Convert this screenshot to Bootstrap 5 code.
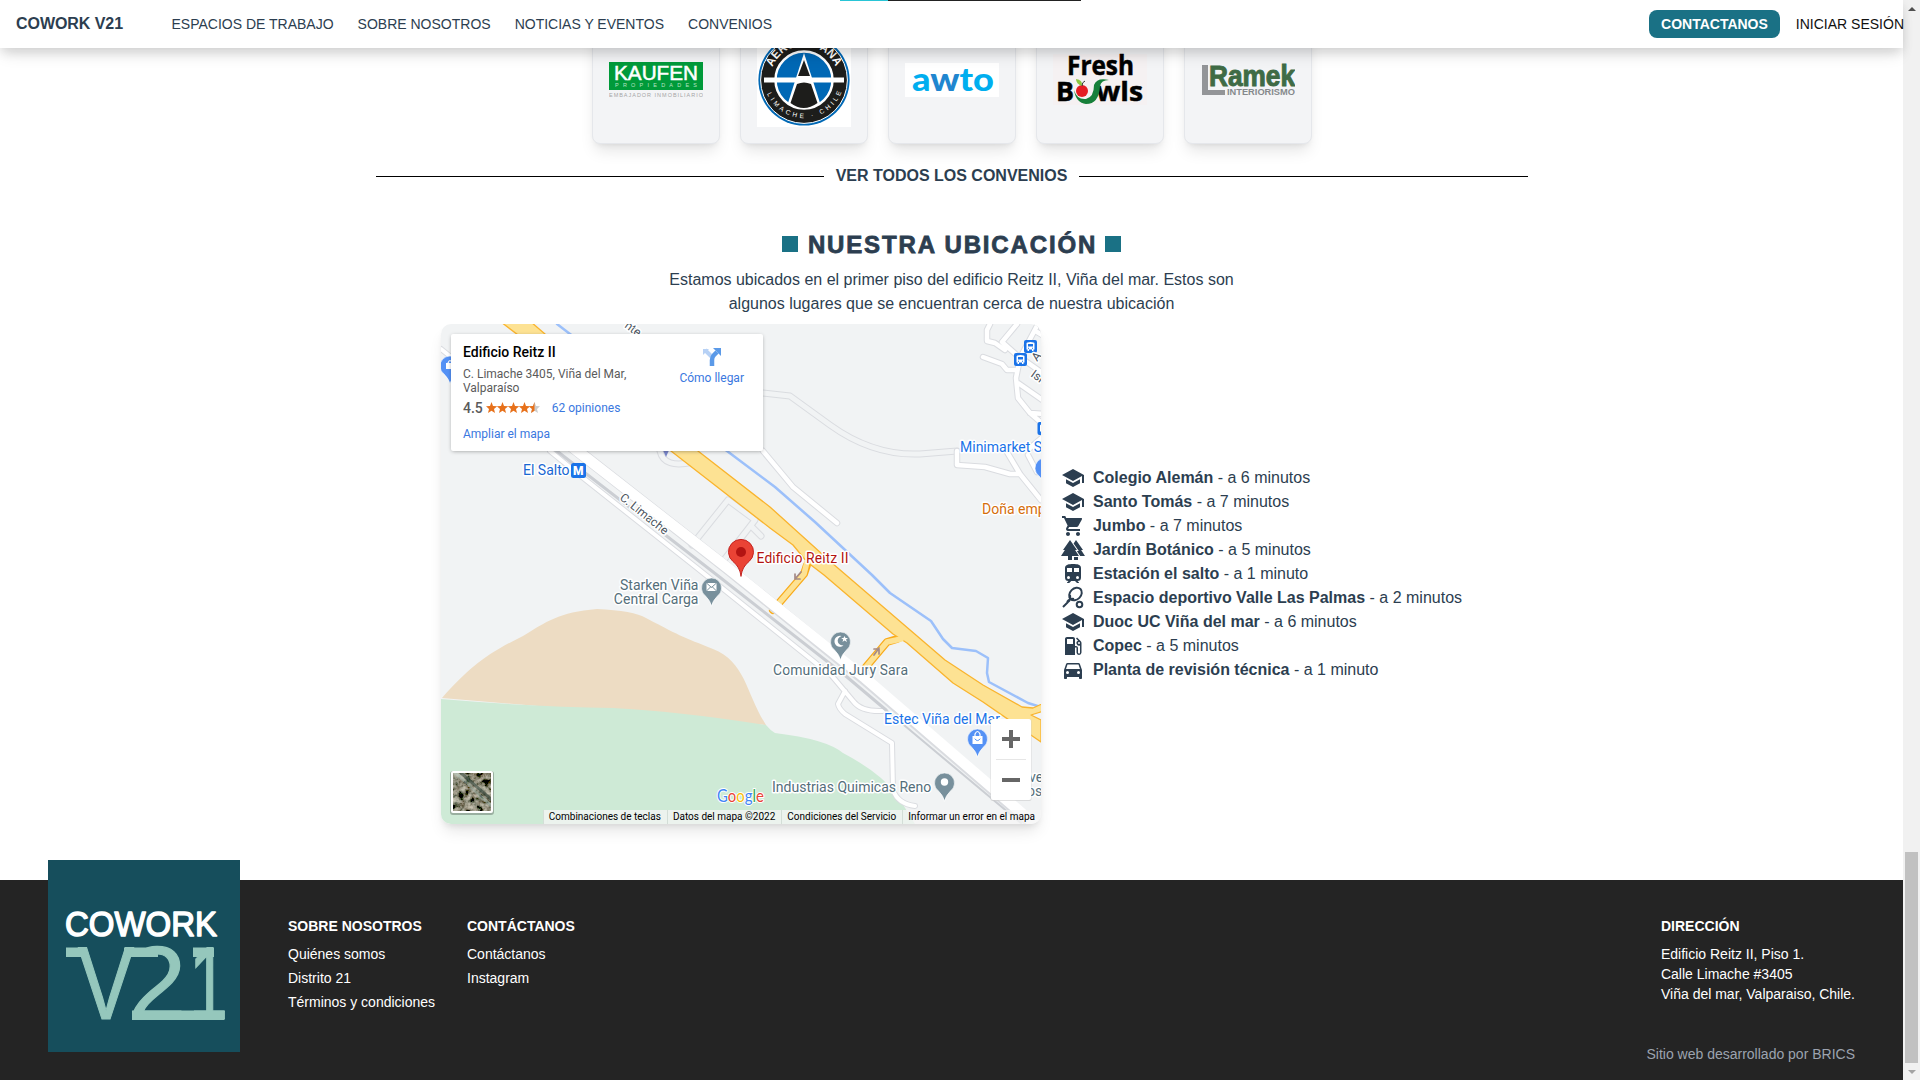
<!DOCTYPE html>
<html lang="es">
<head>
<meta charset="utf-8">
<meta name="viewport" content="width=device-width, initial-scale=1">
<title>Cowork V21</title>
<link href="https://cdn.jsdelivr.net/npm/bootstrap@5.3.0/dist/css/bootstrap.min.css" rel="stylesheet">
<style>
body{font-family:"Liberation Sans",Arial,sans-serif;font-size:16px;line-height:24px;color:#2c3e50;overflow:hidden;height:1080px}
.page-col{width:1903px;height:1080px}
.topbar{height:48px;box-shadow:0 10px 15px -3px rgba(0,0,0,.1),0 4px 10px rgba(0,0,0,.1);z-index:5}
.load-line{left:840px;top:0;width:241px;height:1px;background:linear-gradient(90deg,#29c5d6 48px,#222 48px)}
.brand-name{font-weight:700;font-size:16px;width:155.500px;letter-spacing:-.05px}
.topbar a{font-size:14px;color:#2c3e50;text-decoration:none;white-space:nowrap}
.cta{background:#1a7185;color:#fff!important;font-weight:700;border-radius:8px;height:28px;line-height:28px;padding:0 12px;margin-right:16px}
.topbar .login{color:#111;margin-right:-1px}
.partners{gap:20px;margin-top:-32px}
.partner{width:128px;height:128px;background:#f3f4f6;border:1px solid #e5e7eb;border-radius:8px;padding:16px;box-shadow:0 10px 15px -3px rgba(0,0,0,.1),0 4px 6px -4px rgba(0,0,0,.1)}
.partner svg,.places svg,.foot-logo svg{display:block}
.all-link{width:1152px;margin:20px auto 0;font-weight:700;gap:12px}
.rule{height:1px;background:#000}
.sec-title{margin-top:40px;height:32px;gap:10px;font-size:24px;font-weight:800;white-space:nowrap}
.sec-title .word{letter-spacing:1.850px;margin-right:-2px;padding-top:2px;-webkit-text-stroke:.8px #2c3e50}
.sq{width:16px;height:16px;background:#1a7185}
.intro{margin:8px auto;text-align:center}
.mapbox{width:600px;height:500px;border-radius:10px;overflow:hidden}
.mapwrap{border-radius:10px;box-shadow:0 10px 15px -3px rgba(0,0,0,.1),0 4px 6px -2px rgba(0,0,0,.08)}
.mapbox text,.mapcard,.attrib{font-family:Roboto,Arial,sans-serif}
.halo text{paint-order:stroke;stroke:#fff;stroke-width:3px;stroke-linejoin:round;font-size:14px}
.mapcard{left:10px;top:10px;width:312px;height:117px;background:#fff;border-radius:2px;box-shadow:0 1px 4px -1px rgba(0,0,0,.4);padding:9px 19px 0 12px;font-size:12px;line-height:14px;color:#5b5b5b}
.mapcard b{font-size:14px;font-weight:500;color:#000;line-height:18px;display:block;margin-bottom:6px}
.mapcard a{color:#3a78e0;text-decoration:none}
.stars{margin:6px 0 12px;height:14px}
.score{font-size:14px;font-weight:500;margin-right:3px}
.attrib{right:0;bottom:0;height:14px;font-size:10px;line-height:14px;color:#000;background:rgba(245,245,245,.75)}
.attrib span{padding:0 6px 0 5px;border-left:1px solid #d3ded7;white-space:nowrap}
.places{margin-left:20px;white-space:nowrap}
.places li{height:24px;gap:8px}
.foot{height:200px;margin-top:56px;background:#242424;color:#fff;font-size:14px;padding:0 48px}
.foot-logo{width:192px;height:192px;margin-top:-20px;background:#164e5c;flex:none}
.foot h6{font-size:14px;line-height:20px;font-weight:700;margin:36px 0 6px;white-space:nowrap}
.foot li{height:24px;white-space:nowrap}
.foot .addr li{height:20px;line-height:20px}
.foot .credit{color:#9ca3af;margin-top:40px;line-height:20px;text-align:right}
.sbar{width:17px;height:1080px;background:#f1f1f1;padding:7px 2px 6px}
.thumb{width:13px;height:211px;background:#c1c1c1;margin-top:841px}
</style>
</head>
<body>
<div class="d-flex">
<div class="page-col d-flex flex-column bg-white">
<nav class="topbar bg-white d-flex align-items-center position-relative ps-3 flex-shrink-0">
  <div class="load-line position-absolute"></div>
  <div class="brand-name">COWORK V21</div>
  <div class="d-flex gap-4"><a href="#">ESPACIOS DE TRABAJO</a><a href="#">SOBRE NOSOTROS</a><a href="#">NOTICIAS Y EVENTOS</a><a href="#">CONVENIOS</a></div>
  <a href="#" class="cta ms-auto">CONTACTANOS</a><a href="#" class="login">INICIAR SESIÓN</a>
</nav>

<div class="partners d-flex justify-content-center">
  <div class="partner"><svg width="94" height="94" font-family="Liberation Sans"><rect y="29" width="94" height="28" fill="#009a3a"/><text x="5" y="47" font-size="20" fill="#fff" stroke="#fff" stroke-width=".5" textLength="84" lengthAdjust="spacingAndGlyphs">KAUFEN</text><text x="6" y="53.500" font-size="5.500" fill="#b5e3c4" textLength="82">PROPIEDADES</text><text y="64" font-size="5.500" fill="#a5a5a5" textLength="94">EMBAJADOR INMOBILIARIO</text></svg></div>
  <div class="partner"><svg width="94" height="94" font-family="Liberation Sans"><rect width="94" height="94" fill="#fff"/><circle cx="47" cy="47" r="45.600" fill="#0068b5"/><circle cx="47" cy="47" r="43.400" fill="#1d1d1b" stroke="#fff"/><circle cx="47" cy="47" r="28.500" fill="#0068b5" stroke="#fff" stroke-width="2.500"/><path d="M47 20 31 70q16 12 32 0Z" fill="#fff"/><path d="M47 27 41 43h12zM40 51 33.500 70q13 10 27 0L54 51q-7-3-14 0Z" fill="#1d1d1b"/><path d="M7 44.500h33v5H7zM54 44.500h33v5H54zM40 44.500h14v3l-3 1.500h-8l-3-1.500z" fill="#fff"/><path id="arcT" d="M15.500 34A34 34 0 0 1 78.500 34" fill="none"/><path id="arcB" d="M8 54A40 40 0 0 0 86 54" fill="none"/><text font-size="12" font-weight="700" fill="#fff"><textPath href="#arcT" textLength="80" lengthAdjust="spacingAndGlyphs">AEROLUCANA</textPath></text><text font-size="6.500" fill="#fff"><textPath href="#arcB" startOffset="7" textLength="95">LIMACHE · CHILE</textPath></text></svg></div>
  <div class="partner"><svg width="94" height="94" font-family="Lato"><rect y="30" width="94" height="34" fill="#fff"/><text x="7" y="58" font-weight="900" font-size="32" fill="#00aeef" textLength="82" lengthAdjust="spacingAndGlyphs">a<tspan fill="#2086cf">w</tspan>to</text></svg></div>
  <div class="partner"><svg width="94" height="94" font-family="Open Sans" font-weight="700" font-size="26"><rect y="21" width="94" height="51" fill="#f5f1f2"/><text x="14" y="42" stroke="#000" stroke-width=".5" textLength="67" lengthAdjust="spacingAndGlyphs">Fresh</text><g stroke="#000" stroke-width=".5" font-size="27"><text x="3" y="68" textLength="18" lengthAdjust="spacingAndGlyphs">B</text><text x="43" y="68" textLength="47" lengthAdjust="spacingAndGlyphs">wls</text></g><path d="M21 57q3 10 12 9 8-2 8-14 3-8 15-5-8 0-9 6-1 18-14 18-10-1-12-14Z" fill="#16803a"/><circle cx="29" cy="58" r="6" fill="#e51c23"/><path d="M29 53q-6-2-6-7 7 1 6 7Z" fill="#8bc53f"/><path d="M29 53q0-4 3-5" stroke="#333" fill="none"/></svg></div>
  <div class="partner"><svg width="94" height="94" font-family="Liberation Sans"><path d="M1 32h6v25h17v5H1z" fill="#939598"/><text x="8" y="53" font-weight="700" font-size="29" fill="#3f6b45" stroke="#3f6b45" textLength="86" lengthAdjust="spacingAndGlyphs">Ramek</text><text x="26" y="62" font-size="9" font-weight="700" fill="#85898c" textLength="68" lengthAdjust="spacingAndGlyphs">INTERIORISMO</text></svg></div>
</div>

<div class="all-link d-flex align-items-center"><div class="rule flex-fill"></div><span>VER TODOS LOS CONVENIOS</span><div class="rule flex-fill"></div></div>

<div class="sec-title d-flex justify-content-center align-items-center"><span class="sq"></span><span class="word">NUESTRA UBICACIÓN</span><span class="sq"></span></div>
<p class="intro">Estamos ubicados en el primer piso del edificio Reitz II, Viña del mar. Estos son<br>algunos lugares que se encuentran cerca de nuestra ubicación</p>

<div class="d-flex justify-content-center align-items-center">
<div class="mapwrap">
<div class="mapbox position-relative">
<svg width="600" height="500" fill="none" stroke-linejoin="round" stroke-linecap="round">
<defs>
<g id="pin"><path d="M0 19Q-1 14-6 9A10 10 0 1 1 6 9Q1 14 0 19Z" stroke="#fff" stroke-width=".6"/></g>
<g id="bus" stroke="none"><rect x="-6.500" y="-6.500" width="13" height="13" rx="2" fill="#1a73e8"/><path d="M-4-3q0-1.500 4-1.500t4 1.500v6h-1v1.500H1.500V3h-3v1.500H-3V3h-1Z" fill="#fff"/><path d="M-2.500-2.500h5V0h-5zM-2.500 1.200h1v1h-1zM1.500 1.200h1v1h-1z" fill="#1a73e8"/></g>
<g id="white-roads"><path d="M549 0 546 6V17L554 19 564 26M576 0 561 18 579 34M597 0 579 34 575 54 577 74 589 89 603 101M542 33 561 40 566 46H576M577 59 603 77M589 89 603 90M583 36 603 50M596 8 603 12M516 127V141L544 143 569 150H579M566 128 579 150 600 176M587 131 596 148M322 127 352 163 396 199M603 112 589 124"/></g>
<g id="thin-roads"><path d="M109 127 136 149 256 244 391 352 412 377Q420 388 442 387M404 367 397 380Q398 385 404 390L451 419 452 466Q457 480 474 482M0 25 10 33"/></g>
<g id="outline-roads"><path d="M322 69 349 72 389 101Q432 132 479 130L516 127M219 127Q223 145 252 138M251 221 287 176 314 196 279 241M320 212 312 204"/></g>
</defs>
<rect width="600" height="500" fill="#f1f3f4"/>
<path d="M1 374C28 344 45 330 82 312 105 298 118 288 156 285 180 286 197 289 205 294 245 315 240 312 272 325 305 338 305 370 325 401Z" fill="#eddcc3"/>
<path d="M0 375Q95 383 172 384 235 387 325 401 329 406 334 409 385 415 402 429 440 449 456 471L474 500H0Z" fill="#ceead6"/>
<use href="#outline-roads" stroke="#dadce0" stroke-width="7"/><use href="#outline-roads" stroke="#f1f3f4" stroke-width="5"/>
<use href="#white-roads" stroke="#dadce0" stroke-width="6.500"/><use href="#white-roads" stroke="#fff" stroke-width="4.500"/>
<use href="#thin-roads" stroke="#dadce0" stroke-width="6"/><use href="#thin-roads" stroke="#fff" stroke-width="4"/>
<path d="M116 0 129 10 286 127 334 163 374 198 431 251 449 269 490 297 502 315 511 324 535 327 547 334 546 349 548 358 587 379 600 383" stroke="#9cc0fa" stroke-width="2.500"/>
<g stroke="#f9ab1a" stroke-width="8"><path d="M366 241 363 250 332 286M456 315 446 318 419 350"/></g>
<path d="M60-2 230 127 329 204 352 221 366 238 383 251 452 310 466 319 512 359 542 378 600 418V396L590 391 603 387V379L592 384 581 383 542 361 504 336 391 239 329 183 257 127 104 10 90-2Z" fill="#fde293" stroke="#f9b42e" stroke-width="1.300"/>
<path d="M366 238 363 250 332 286M460 315 446 318 419 350" stroke="#fde293" stroke-width="5.500"/>
<path d="M115 110 286 244 422 354 600 507" stroke="#dadce0" stroke-width="12"/>
<path d="M116 111 288 245 424 354 604 509" stroke="#fff" stroke-width="10.500"/>
<path d="M112 124 276 251 406 353 445 386" stroke="#cbced3" stroke-width="3"/><path d="M445 386 562 484 580 499" stroke="#cbced3" stroke-width="2"/>
<path d="M360 248l-6 7m0-5v5h5M433 331l5-7m-5 1h5v5" stroke="#a58a87" stroke-width="1.700"/>
<g stroke="none">
<g fill="#5491f5"><use href="#pin" x="9" y="41"/><use href="#pin" x="536.500" y="414"/><use href="#pin" x="604" y="143"/></g><path d="M221 124h8l-4 9z" fill="#7986cb"/>
<g fill="#78909c"><use href="#pin" x="270.500" y="263"/><use href="#pin" x="399.500" y="317"/><use href="#pin" x="503.500" y="458"/></g>
<path d="M5 39h8v6H5zM531.500 412h10v8h-10zM265.500 259h10v8h-10z" fill="#fff"/>
<path d="m265.500 259 5 4.500 5-4.500m-10 8 4-4m6 4-4-4" stroke="#78909c"/><path d="M534 412v-2q2.500-5 5 0v2M7 39q2-5 4 0" stroke="#fff" stroke-width="1.200" fill="none"/><path d="M534 415q2.500 3.500 5 0" stroke="#5491f5" fill="none"/>
<circle cx="503.500" cy="458" r="3.700" fill="#fff"/><path d="M402.500 321.500A5.500 5.500 0 1 1 400.500 312Q395.500 314 397 318.500 398.500 321.500 402.500 321.500ZM403.500 312l1 2h2.500l-2 1.500 1 2.500-2.500-1.500-2 1.500.7-2.500-2-1.500h2.300z" fill="#fff"/>
<path d="M300 252Q299 243 292 237.500A12.500 12.500 0 1 1 308 237.500Q301 243 300 252Z" fill="#ea4335" stroke="#c5221f"/><circle cx="300" cy="228" r="5" fill="#b31412"/>
<use href="#bus" x="589.500" y="22.500"/><use href="#bus" x="579.500" y="35.500"/><use href="#bus" x="603" y="104.500"/>
<rect x="130" y="139" width="15" height="15" rx="2.500" fill="#1a73e8"/><text x="132" y="151" font-size="12" font-weight="900" fill="#fff">M</text>
<g class="halo"><text x="82" y="151" fill="#1967d2">El Salto</text><text x="315.500" y="239" fill="#b31412" textLength="92">Edificio Reitz II</text><text x="519" y="128" fill="#1a73e8">Minimarket S</text><text x="541" y="190" fill="#d56e0c">Doña emp</text>
<g fill="#546e7a"><text x="257.500" y="266" text-anchor="end">Starken Viña</text><text x="257.500" y="280" text-anchor="end">Central Carga</text><text x="332" y="351" textLength="135">Comunidad Jury Sara</text><text x="331" y="468">Industrias Quimicas Reno</text><text x="588" y="458">ve</text><text x="586" y="472">os</text></g>
<text x="443" y="400" fill="#1a73e8">Estec Viña del Mar</text>
<g fill="#4b545e"><text transform="translate(178 175) rotate(38.500)" style="font-size:12px" textLength="58">C. Limache</text><text transform="translate(183 3) rotate(36)" style="font-size:12px">nte</text><text transform="translate(589 52) rotate(35)" style="font-size:12px">Isr</text><text transform="translate(596 38) rotate(-50)" style="font-size:12px">A</text></g>
<text x="276" y="478" style="font-size:17px;font-family:Lato;stroke-width:2px" textLength="47" lengthAdjust="spacingAndGlyphs"><tspan fill="#4285f4">G</tspan><tspan fill="#ea4335">o</tspan><tspan fill="#fbbc04">o</tspan><tspan fill="#4285f4">g</tspan><tspan fill="#34a853">l</tspan><tspan fill="#ea4335">e</tspan></text></g>
<rect x="549.500" y="395" width="41" height="82" rx="2" fill="#ccc" opacity=".6"/><rect x="550" y="395" width="40" height="81" rx="2" fill="#fff"/><path d="M561 413h7v-7h4v7h7v4h-7v7h-4v-7h-7zM561 454h18v4h-18z" fill="#666"/><path d="M555 435h30v1h-30z" fill="#e6e6e6"/>
<rect x="9" y="447" width="44" height="44" rx="3" fill="#000" opacity=".25"/><rect x="10" y="447" width="42" height="42" rx="2" fill="#fff"/>
</g>
<svg x="12" y="449" width="38" height="38"><filter id="terrain" x="0" y="0" width="1" height="1"><feTurbulence type="fractalNoise" baseFrequency=".16" numOctaves="4" seed="8"/><feColorMatrix values="1.300 0 0 0 -.4 1.200 .1 0 0 -.41 1.050 .1 0 0 -.4 0 0 0 0 1"/></filter><rect width="38" height="38" filter="url(#terrain)"/><path d="M2 0 14 10 25 21 40 34" stroke="#a9bbb0" stroke-width="3" opacity=".6"/><path d="M8 0 24 14 40 28" stroke="#2b4036" stroke-width="3" opacity=".6"/></svg>
</svg>
<div class="mapcard position-absolute d-flex justify-content-between">
  <div><b>Edificio Reitz II</b><div>C. Limache 3405, Viña del Mar,<br>Valparaíso</div>
  <div class="stars d-flex align-items-center"><span class="score">4.5</span>
  <svg width="54" height="12"><defs><path id="st" d="M5.500 0 7 3.900l4.200.3-3.200 2.700 1 4.200-3.500-2.300L2 11.100l1-4.200L-.2 4.200 4 3.900z"/><clipPath id="half"><path d="M-1 0h6.500v12H-1z"/></clipPath></defs><g fill="#e7711b"><use href="#st"/><use href="#st" x="11"/><use href="#st" x="22"/><use href="#st" x="33"/></g><use href="#st" x="43" fill="#ccc"/><g transform="translate(43)"><use href="#st" fill="#e7711b" clip-path="url(#half)"/></g></svg>
  <a href="#" class="ms-2 ps-1">62 opiniones</a></div><a href="#">Ampliar el mapa</a></div>
  <div class="text-center pt-1"><svg width="22" height="20" class="d-block mx-auto mb-1"><path d="m4 3 8 8" stroke="#b7d1f5" stroke-width="4"/><path d="M2 2v6l6-6z" fill="#b7d1f5"/><path d="M11 19v-6q0-3 2-5l3-3" stroke="#5b9ae8" stroke-width="4.500" fill="none"/><path d="M12 1h8v8z" fill="#5b9ae8"/></svg><a href="#">Cómo llegar</a></div>
</div>
<div class="attrib position-absolute d-flex"><span>Combinaciones de teclas</span><span>Datos del mapa ©2022</span><span>Condiciones del Servicio</span><span>Informar un error en el mapa</span></div>
</div></div>

<svg class="d-none"><symbol id="school" viewBox="0 0 24 24"><path d="M5 13.180v4L12 21l7-3.820v-4L12 17zM12 3 1 9l11 6 9-4.910V17h2V9z"/></symbol></svg>
<ul class="places list-unstyled mb-0">
<li class="d-flex"><svg width="24" height="24" fill="#2c3e50"><use href="#school"/></svg><span><b>Colegio Alemán</b> - a 6 minutos</span></li>
<li class="d-flex"><svg width="24" height="24" fill="#2c3e50"><use href="#school"/></svg><span><b>Santo Tomás</b> - a 7 minutos</span></li>
<li class="d-flex"><svg width="24" height="24" fill="#2c3e50"><path d="M7 18c-1.100 0-1.990.9-1.990 2S5.900 22 7 22s2-.9 2-2-.9-2-2-2zM1 2v2h2l3.600 7.590-1.350 2.450C4.520 15.370 5.480 17 7 17h12v-2H7.420c-.14 0-.25-.11-.25-.25l.03-.12.9-1.630h7.450c.75 0 1.410-.41 1.750-1.030l3.580-6.490A1 1 0 0 0 20 4H5.210l-.94-2zM17 18c-1.100 0-1.990.9-1.990 2s.89 2 1.990 2 2-.9 2-2-.9-2-2-2z"/></svg><span><b>Jumbo</b> - a 7 minutos</span></li>
<li class="d-flex"><svg width="24" height="24" fill="#2c3e50"><path d="M9 2 2 12h1.900L0 18h7v4h4v-4h7l-3.900-6H16zM13 19h4v3h-4zM20.100 12H22L15 2l-2.400 3.400 5.200 7.500h-1.900L19.200 18H24z"/></svg><span><b>Jardín Botánico</b> - a 5 minutos</span></li>
<li class="d-flex"><svg width="24" height="24" fill="#2c3e50"><path fill-rule="evenodd" d="M12 2C8 2 4 2.500 4 6v9.500A3.500 3.500 0 0 0 7.500 19L6 20.500v.5h2.230l2-2H14l2 2h2v-.5L16.500 19a3.500 3.500 0 0 0 3.500-3.500V6c0-3.500-3.580-4-8-4M7.500 17a1.500 1.500 0 1 1 0-3 1.500 1.500 0 0 1 0 3M11 10H6V6h5zM13 10V6h5v4zM16.500 17a1.500 1.500 0 1 1 0-3 1.500 1.500 0 0 1 0 3"/></svg><span><b>Estación el salto</b> - a 1 minuto</span></li>
<li class="d-flex"><svg width="24" height="24" fill="none" stroke="#2c3e50" stroke-width="2"><ellipse cx="14.500" cy="8" rx="7" ry="5.500" transform="rotate(-45 14.500 8)"/><path d="M9 9q1 5-2 7L2 21M13 13q-4-1-7 3"/><circle cx="18.500" cy="18.500" r="2.800"/></svg><span><b>Espacio deportivo Valle Las Palmas</b> - a 2 minutos</span></li>
<li class="d-flex"><svg width="24" height="24" fill="#2c3e50"><use href="#school"/></svg><span><b>Duoc UC Viña del mar</b> - a 6 minutos</span></li>
<li class="d-flex"><svg width="24" height="24" fill="#2c3e50"><path d="m19.770 7.230.01-.01-3.720-3.720L15 4.560l2.110 2.110A2.500 2.500 0 0 0 19 11.500v7.210a1 1 0 0 1-2-.21V14c0-1.100-.9-2-2-2h-1V5c0-1.100-.9-2-2-2H6c-1.100 0-2 .9-2 2v16h10v-7.500h1.500v5a2.500 2.500 0 0 0 5 0V9c0-.69-.28-1.320-.73-1.770zM12 10H6V5h6zm6 0a1 1 0 1 1 0-2 1 1 0 0 1 0 2z"/></svg><span><b>Copec</b> - a 5 minutos</span></li>
<li class="d-flex"><svg width="24" height="24" fill="#2c3e50"><path d="M18.920 6.010C18.720 5.420 18.160 5 17.500 5h-11c-.66 0-1.210.42-1.420 1.010L3 12v8c0 .55.45 1 1 1h1c.55 0 1-.45 1-1v-1h12v1c0 .55.45 1 1 1h1c.55 0 1-.45 1-1v-8zM6.500 16a1.500 1.500 0 1 1 0-3 1.500 1.500 0 0 1 0 3zm11 0a1.500 1.500 0 1 1 0-3 1.500 1.500 0 0 1 0 3zM5 11l1.500-4.500h11L19 11z"/></svg><span><b>Planta de revisión técnica</b> - a 1 minuto</span></li>
</ul>
</div>

<footer class="foot d-flex flex-shrink-0">
  <div class="foot-logo"><svg width="192" height="192" font-family="Liberation Sans"><text x="17" y="75.500" font-size="35" fill="#fff" stroke="#fff" stroke-width="1.500" stroke-linejoin="round" textLength="152" lengthAdjust="spacingAndGlyphs">COWORK</text><g fill="#95c7bc" stroke="#95c7bc" stroke-width="1.200" font-size="103"><text x="80" y="159" textLength="58" lengthAdjust="spacingAndGlyphs">2</text><path d="M82 97h21v18H82z" fill="#164e5c" stroke="none"/><text x="30" y="159" textLength="56" lengthAdjust="spacingAndGlyphs">V</text><text x="141" y="159" textLength="39" lengthAdjust="spacingAndGlyphs">1</text></g><path d="M18 87.500h20v9.500H18zM76 87.500h34v9.500H76zM145 87.500h21v9.500h-21zM84 150.500h92v9.500H84z" fill="#95c7bc"/></svg></div>
  <div style="width:179px;margin-left:48px"><h6>SOBRE NOSOTROS</h6><ul class="list-unstyled"><li>Quiénes somos</li><li>Distrito 21</li><li>Términos y condiciones</li></ul></div>
  <div><h6>CONTÁCTANOS</h6><ul class="list-unstyled"><li>Contáctanos</li><li>Instagram</li></ul></div>
  <div class="ms-auto d-flex flex-column align-items-end"><div class="addr"><h6 class="mb-2">DIRECCIÓN</h6><ul class="list-unstyled mb-0"><li>Edificio Reitz II, Piso 1.</li><li>Calle Limache #3405</li><li>Viña del mar, Valparaiso, Chile.</li></ul></div><div class="credit">Sitio web desarrollado por BRICS</div></div>
</footer>
</div>
<div class="sbar d-flex flex-column align-items-center"><svg width="8" height="4" class="flex-shrink-0"><path d="M0 4 4 0l4 4z" fill="#505050"/></svg><div class="thumb flex-shrink-0"></div><svg width="8" height="4" class="mt-auto flex-shrink-0"><path d="M0 0h8L4 4z" fill="#a3a3a3"/></svg></div>
</div>
<script src="https://cdn.jsdelivr.net/npm/bootstrap@5.3.0/dist/js/bootstrap.bundle.min.js"></script>
</body>
</html>
